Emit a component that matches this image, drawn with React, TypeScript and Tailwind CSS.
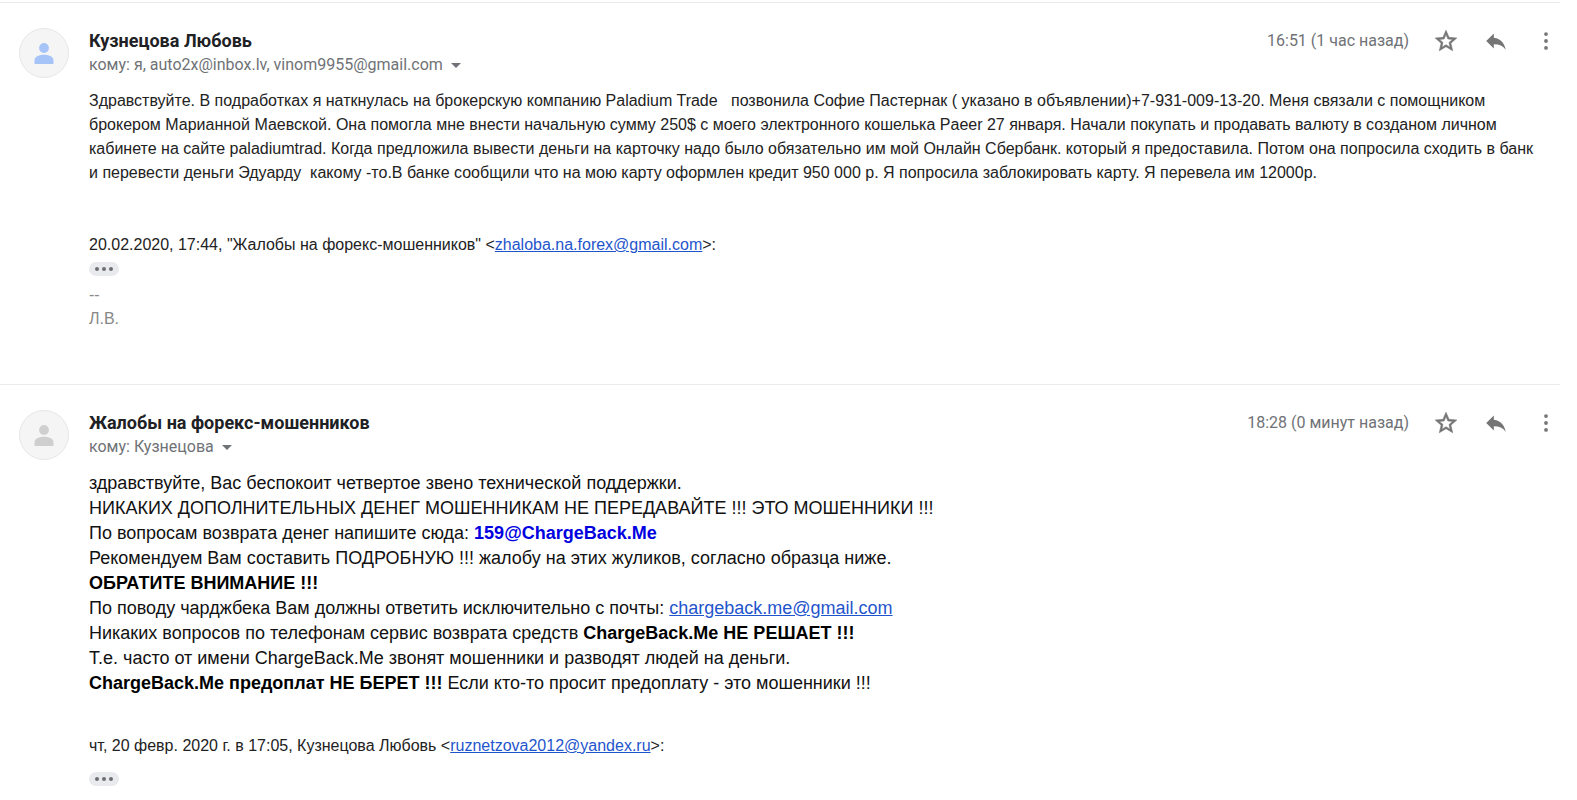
import React from 'react';

type IconProps = { className?: string };

function StarIcon({ className }: IconProps) {
  return (
    <svg viewBox="0 0 24 24" className={className} fill="currentColor" stroke="currentColor" strokeWidth="0.5" aria-hidden="true">
      <path d="M22 9.24l-7.19-.62L12 2 9.19 8.63 2 9.24l5.46 4.73L5.82 21 12 17.27 18.18 21l-1.63-7.03L22 9.24zM12 15.4l-3.76 2.27 1-4.28-3.32-2.88 4.38-.38L12 6.1l1.71 4.04 4.38.38-3.32 2.88 1 4.28L12 15.4z" />
    </svg>
  );
}

function ReplyIcon({ className }: IconProps) {
  return (
    <svg viewBox="0 0 24 24" className={className} fill="currentColor" aria-hidden="true">
      <path d="M10 9V5l-7 7 7 7v-4.1c5 0 8.5 1.6 11 5.1-1-5-4-10-11-11z" />
    </svg>
  );
}

function MoreIcon({ className }: IconProps) {
  return (
    <svg viewBox="0 0 24 24" className={className} fill="currentColor" aria-hidden="true">
      <circle cx="12" cy="5.6" r="1.75" />
      <circle cx="12" cy="12" r="1.75" />
      <circle cx="12" cy="18.4" r="1.75" />
    </svg>
  );
}

function Avatar({ tone }: { tone: 'blue' | 'gray' }) {
  return (
    <svg
      viewBox="0 0 50 50"
      className={`size-[50px] shrink-0 ${tone === 'blue' ? 'text-[#a7c4f8]' : 'text-[#cfcfcf]'}`}
      aria-hidden="true"
    >
      <circle cx="25" cy="25" r="24.5" fill="#f5f5f5" stroke="#e6e6e6" />
      <circle cx="25" cy="20" r="4.9" fill="currentColor" />
      <path d="M15.5 36v-3.6c0-4 5.4-5.6 9.5-5.6s9.5 1.6 9.5 5.6V36z" fill="currentColor" />
    </svg>
  );
}

function IconButton({ label, children }: { label: string; children: React.ReactNode }) {
  return (
    <button type="button" aria-label={label} className="size-[26px] text-[#757575]">
      {children}
    </button>
  );
}

function TrimmedContent() {
  return (
    <button
      type="button"
      aria-label="Показать скрытый текст"
      className="flex h-[14px] w-[30px] items-center justify-center gap-[3px] rounded-full bg-[#e8eaed]"
    >
      <span className="size-1 rounded-full bg-[#6b6e73]" />
      <span className="size-1 rounded-full bg-[#6b6e73]" />
      <span className="size-1 rounded-full bg-[#6b6e73]" />
    </button>
  );
}

type MessageProps = {
  sender: string;
  recipients: string;
  time: string;
  tone: 'blue' | 'gray';
  children: React.ReactNode;
};

function Message({ sender, recipients, time, tone, children }: MessageProps) {
  return (
    <article className="flex gap-5 border-t border-[#ebebeb] pt-[25px] pl-[19px]">
      <Avatar tone={tone} />
      <div className="min-w-0 flex-1">
        <header className="flex items-start justify-between pr-px font-[Roboto,sans-serif]">
          <div>
            <h2 className="text-[18px] leading-[26px] font-bold text-[#202124]">{sender}</h2>
            <button type="button" className="flex items-center gap-2 text-[16px] leading-[22px] text-[#6f7276]">
              {recipients}
              <svg viewBox="0 0 10 5" className="h-[5px] w-[10px]" fill="currentColor" aria-hidden="true">
                <path d="M0 0h10L5 5z" />
              </svg>
            </button>
          </div>
          <div className="flex items-center gap-6">
            <span className="text-[16px] leading-[26px] text-[#6f7276]">{time}</span>
            <IconButton label="Пометить">
              <StarIcon />
            </IconButton>
            <IconButton label="Ответить">
              <ReplyIcon />
            </IconButton>
            <IconButton label="Ещё">
              <MoreIcon />
            </IconButton>
          </div>
        </header>
        {children}
      </div>
    </article>
  );
}

function MailLink({ address }: { address: string }) {
  return (
    <a href={`mailto:${address}`} className="text-[#1f55cc] underline">
      {address}
    </a>
  );
}

export default function App() {
  return (
    <main className="bg-white pt-[2px] pr-[17px] font-['Liberation_Sans',Arial,sans-serif]">
      <Message
        sender="Кузнецова Любовь"
        recipients="кому: я, auto2x@inbox.lv, vinom9955@gmail.com"
        time="16:51 (1 час назад)"
        tone="blue"
      >
        <div className="pt-[13px] pb-[53px] text-[16px] leading-6 text-[#222222]">
          <p className="pr-5 whitespace-pre-wrap">
            {'Здравствуйте. В подработках я наткнулась на брокерскую компанию Paladium Trade   позвонила Софие Пастернак ( указано в объявлении)+7-931-009-13-20. Меня связали с помощником брокером Марианной Маевской. Она помогла мне внести начальную сумму 250$ с моего электронного кошелька Paeer 27 января. Начали покупать и продавать валюту в созданом личном кабинете на сайте paladiumtrad. Когда предложила вывести деньги на карточку надо было обязательно им мой Онлайн Сбербанк. который я предоставила. Потом она попросила сходить в банк и перевести деньги Эдуарду  какому -то.В банке сообщили что на мою карту оформлен кредит 950 000 р. Я попросила заблокировать карту. Я перевела им 12000р.'}
          </p>
          <p className="pt-12 pb-[5px]">
            20.02.2020, 17:44, "Жалобы на форекс-мошенников" &lt;
            <MailLink address="zhaloba.na.forex@gmail.com" />
            &gt;:
          </p>
          <TrimmedContent />
          <p className="pt-[7px] text-[#888888]">
            --
            <br />
            Л.В.
          </p>
        </div>
      </Message>
      <Message sender="Жалобы на форекс-мошенников" recipients="кому: Кузнецова" time="18:28 (0 минут назад)" tone="gray">
        <div className="pt-[13px]">
          <div className="text-[18px] leading-[25px] text-[#111111]">
            <p>здравствуйте, Вас беспокоит четвертое звено технической поддержки.</p>
            <p>НИКАКИХ ДОПОЛНИТЕЛЬНЫХ ДЕНЕГ МОШЕННИКАМ НЕ ПЕРЕДАВАЙТЕ !!! ЭТО МОШЕННИКИ !!!</p>
            <p>
              По вопросам возврата денег напишите сюда: <b className="text-[#0000e0]">159@ChargeBack.Me</b>
            </p>
            <p>Рекомендуем Вам составить ПОДРОБНУЮ !!! жалобу на этих жуликов, согласно образца ниже.</p>
            <p>
              <b className="text-black">ОБРАТИТЕ ВНИМАНИЕ !!!</b>
            </p>
            <p>
              По поводу чарджбека Вам должны ответить исключительно с почты:{' '}
              <MailLink address="chargeback.me@gmail.com" />
            </p>
            <p>
              Никаких вопросов по телефонам сервис возврата средств{' '}
              <b className="text-black">ChargeBack.Me НЕ РЕШАЕТ !!!</b>
            </p>
            <p>Т.е. часто от имени ChargeBack.Me звонят мошенники и разводят людей на деньги.</p>
            <p>
              <b className="text-black">ChargeBack.Me предоплат НЕ БЕРЕТ !!!</b> Если кто-то просит предоплату - это
              мошенники !!!
            </p>
          </div>
          <p className="pt-[38px] pb-[14px] text-[16px] leading-6 text-[#222222]">
            чт, 20 февр. 2020 г. в 17:05, Кузнецова Любовь &lt;
            <MailLink address="ruznetzova2012@yandex.ru" />
            &gt;:
          </p>
          <TrimmedContent />
        </div>
      </Message>
    </main>
  );
}
